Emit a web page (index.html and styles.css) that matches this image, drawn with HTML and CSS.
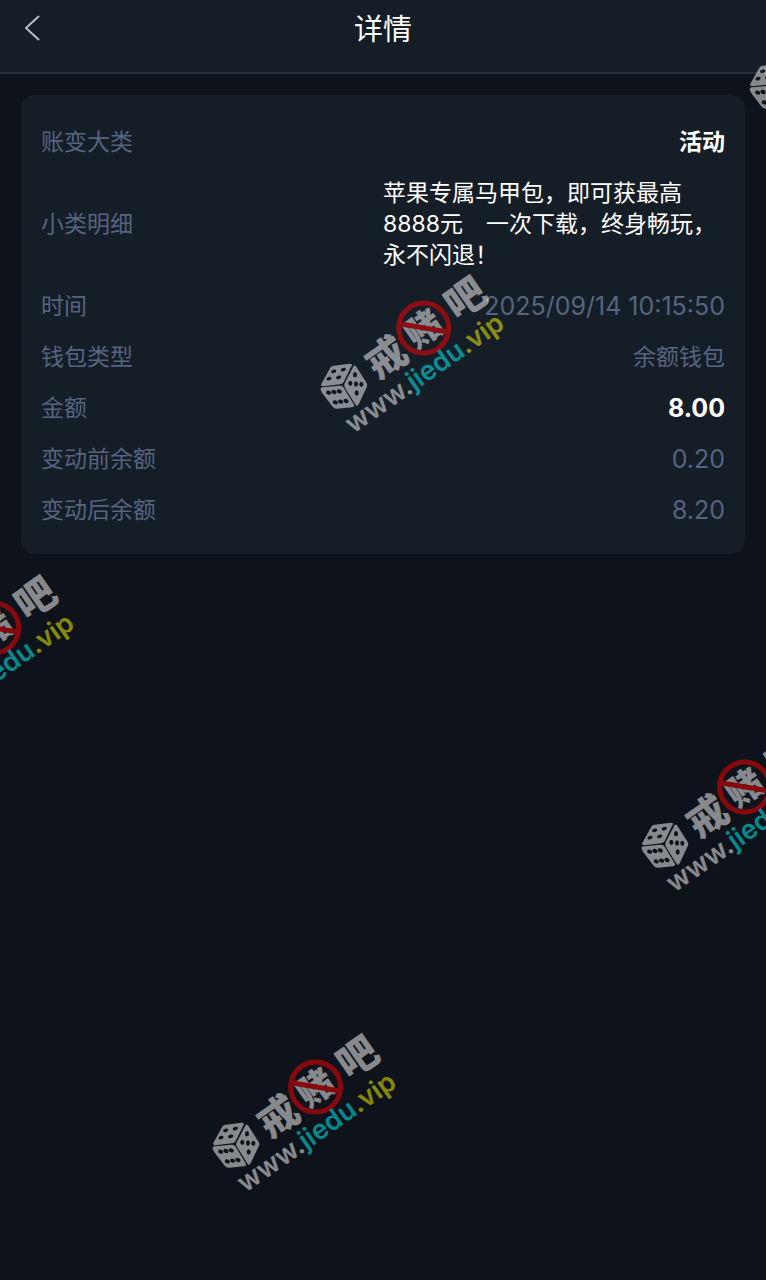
FILE: index.html
```html
<!DOCTYPE html>
<html lang="zh-CN">
<head>
    <meta charset="UTF-8">
    <meta name="viewport" content="width=device-width, initial-scale=1.0">
    <title>详情</title>
    <link rel="stylesheet" href="styles.css">
</head>
<body>
    <header class="header">
        <button class="back" type="button" aria-label="返回">
            <svg viewBox="0 0 16 26" width="16" height="26">
                <path d="M14.500 1.500L2 13l12.500 11.500"/>
            </svg>
        </button>
        <h1>详情</h1>
    </header>

    <main>
        <dl class="card">
            <div class="row">
                <dt>账变大类</dt>
                <dd class="strong">活动</dd>
            </div>
            <div class="row">
                <dt>小类明细</dt>
                <dd class="detail">苹果专属马甲包，即可获最高8888元　一次下载，终身畅玩，永不闪退！</dd>
            </div>
            <div class="row">
                <dt>时间</dt>
                <dd class="number">2025/09/14 10:15:50</dd>
            </div>
            <div class="row">
                <dt>钱包类型</dt>
                <dd>余额钱包</dd>
            </div>
            <div class="row">
                <dt>金额</dt>
                <dd class="number strong">8.00</dd>
            </div>
            <div class="row">
                <dt>变动前余额</dt>
                <dd class="number">0.20</dd>
            </div>
            <div class="row">
                <dt>变动后余额</dt>
                <dd class="number">8.20</dd>
            </div>
        </dl>
    </main>

    <!-- watermark stamps, scattered over the page -->
    <div class="watermarks" aria-hidden="true">
        <svg class="mark mark-1" viewBox="0 0 690 570">
            <g id="stamp">
                <g class="dice">
                    <path d="M92 322Q95 318 101 317L149 311Q160 311 154 319L131 366Q128 372 120 373L70 379Q60 378 65 370Z"/>
                    <path d="M161 318Q165 314 168 319L200 369Q204 376 200 382L176 433Q171 441 167 435L134 382Q131 376 134 370Z"/>
                    <path d="M62 389Q61 382 69 382L119 377Q127 376 131 383L161 433Q165 441 156 442L112 446Q103 447 98 440L66 398Z"/>
                </g>
                <g class="dots">
                    <ellipse cx="101" cy="334" rx="8" ry="5" transform="rotate(-20 101 334)"/>
                    <ellipse cx="130" cy="329" rx="8" ry="5" transform="rotate(-20 130 329)"/>
                    <ellipse cx="87" cy="356" rx="8" ry="5" transform="rotate(-20 87 356)"/>
                    <ellipse cx="116" cy="352" rx="8" ry="5" transform="rotate(-20 116 352)"/>
                    <ellipse cx="165" cy="344" rx="6" ry="8"/>
                    <ellipse cx="151" cy="370" rx="6" ry="8"/>
                    <ellipse cx="168" cy="372" rx="6" ry="8"/>
                    <ellipse cx="184" cy="373" rx="6" ry="8"/>
                    <ellipse cx="170" cy="399" rx="6" ry="8"/>
                    <ellipse cx="86" cy="398" rx="8" ry="6" transform="rotate(20 86 398)"/>
                    <ellipse cx="102" cy="396" rx="8" ry="6" transform="rotate(20 102 396)"/>
                    <ellipse cx="118" cy="394" rx="8" ry="6" transform="rotate(20 118 394)"/>
                    <ellipse cx="106" cy="427" rx="8" ry="6" transform="rotate(20 106 427)"/>
                    <ellipse cx="122" cy="425" rx="8" ry="6" transform="rotate(20 122 425)"/>
                    <ellipse cx="138" cy="423" rx="8" ry="6" transform="rotate(20 138 423)"/>
                </g>
                <g class="brand">
                    <text transform="translate(258 292) rotate(-35)" y="44">戒</text>
                    <text transform="translate(370 205) rotate(-35)" y="40" class="small">赌</text>
                    <text transform="translate(496 114) rotate(-35)" y="44">吧</text>
                </g>
                <circle class="ban" cx="371" cy="204" r="75"/>
                <path class="ban" d="M298 191L444 216"/>
                <text class="site" transform="translate(160 522) rotate(-35)">www.<tspan class="cyan">jiedu</tspan><tspan class="yellow">.vip</tspan></text>
            </g>
        </svg>
        <svg class="mark mark-2" viewBox="0 0 690 570"><use href="#stamp"/></svg>
        <svg class="mark mark-3" viewBox="0 0 690 570"><use href="#stamp"/></svg>
        <svg class="mark mark-4" viewBox="0 0 690 570"><use href="#stamp"/></svg>
        <svg class="mark mark-5" viewBox="0 0 690 570"><use href="#stamp"/></svg>
    </div>
</body>
</html>
```

FILE: styles.css
```css
* {
    box-sizing: border-box;
}

body {
    position: relative;
    min-height: 100vh;
    margin: 0;
    background-color: #0e131b;
    color: #ffffff;
    font-family: Inter, "Noto Sans CJK SC", sans-serif;
}

.header {
    display: grid;
    grid-template-columns: 64px 1fr 64px;
    align-items: center;
    height: 74px;
    padding-bottom: 16px;
    background-color: #151d27;
    border-bottom: 2px solid #242e3d;
}

.header h1 {
    margin: 0;
    padding-top: 4px;
    font-size: 29px;
    font-weight: 400;
    line-height: 40px;
    text-align: center;
}

.back {
    display: flex;
    align-items: center;
    justify-content: center;
    height: 48px;
    padding: 0;
    border: none;
    background: none;
    cursor: pointer;
}

.back path {
    fill: none;
    stroke: #b4bccd;
    stroke-width: 2;
    stroke-linecap: round;
    stroke-linejoin: round;
}

.card {
    margin: 21px;
    padding: 22px 20px 18px;
    border-radius: 14px;
    background-color: #151d27;
}

.row {
    display: flex;
    align-items: center;
    justify-content: space-between;
    padding: 10px 0;
    color: #566481;
    font-size: 23px;
    line-height: 31px;
}

dd {
    margin: 0;
}

.number {
    font-size: 25px;
}

.strong {
    color: #ffffff;
    font-weight: 700;
}

.detail {
    width: 50%;
    color: #ffffff;
}

/* watermark */
.watermarks {
    position: absolute;
    inset: 0;
    overflow: hidden;
    pointer-events: none;
}

.mark {
    position: absolute;
    width: 230px;
    height: 190px;
    overflow: visible;
    opacity: 0.5;
}

.mark-1 {
    left: 300px;
    top: 260px;
}

.mark-2 {
    left: 192px;
    top: 1019px;
}

.mark-3 {
    left: 621px;
    top: 719px;
}

.mark-4 {
    left: -130px;
    top: 560px;
}

.mark-5 {
    left: 729px;
    top: -40px;
}

.dice,
.brand,
.site {
    fill: #ffffff;
}

.dots {
    fill: #0e131b;
}

.brand {
    font-family: "Noto Sans CJK SC", sans-serif;
    font-size: 120px;
    font-weight: 900;
    text-anchor: middle;
}

.brand .small {
    font-size: 108px;
}

.ban {
    fill: none;
    stroke: #ff0000;
    stroke-width: 15;
}

.site {
    font-size: 81px;
    font-weight: 600;
}

.cyan {
    fill: #00ffff;
}

.yellow {
    fill: #ffff00;
}
```
